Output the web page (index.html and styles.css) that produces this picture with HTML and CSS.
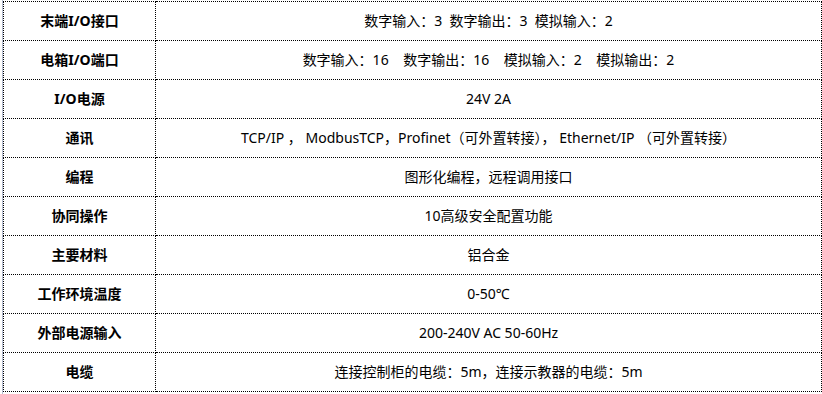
FILE: index.html
```html
<!DOCTYPE html>
<html lang="zh-CN">
<head>
<meta charset="utf-8">
<link rel="stylesheet" href="styles.css">
</head>
<body>
<div class="sheet">
<table class="spec">
<tr><th>末端I/O接口</th><td>数字输入：3&nbsp;&nbsp;数字输出：3&nbsp;&nbsp;模拟输入：2</td></tr>
<tr><th>电箱I/O端口</th><td>数字输入：16&nbsp;&nbsp;&nbsp;&nbsp;数字输出：16&nbsp;&nbsp;&nbsp;&nbsp;模拟输入：2&nbsp;&nbsp;&nbsp;&nbsp;模拟输出：2</td></tr>
<tr><th>I/O电源</th><td>24V 2A</td></tr>
<tr><th>通讯</th><td>TCP/IP ， ModbusTCP，Profinet（可外置转接）， Ethernet/IP （可外置转接）</td></tr>
<tr><th>编程</th><td>图形化编程，远程调用接口</td></tr>
<tr><th>协同操作</th><td>10高级安全配置功能</td></tr>
<tr><th>主要材料</th><td>铝合金</td></tr>
<tr><th>工作环境温度</th><td>0-50℃</td></tr>
<tr><th>外部电源输入</th><td>200-240V AC 50-60Hz</td></tr>
<tr><th>电缆</th><td>连接控制柜的电缆：5m，连接示教器的电缆：5m</td></tr>
</table>
</div>
</body>
</html>
```
FILE: styles.css
```css
html, body {
  margin: 0;
  padding: 0;
  background: #ffffff;
}
body {
  font-family: "Noto Sans", "Noto Sans CJK SC", sans-serif;
  font-size: 14px;
  color: #000;
}
.sheet {
  margin-left: 2px;
  padding-top: 1px;
  border-left: 1px solid #b6bed2;
  height: 393px;
}
.spec {
  border-collapse: collapse;
  width: 819px;
  table-layout: fixed;
}
.spec th,
.spec td {
  border: 1px dotted #000;
  height: 38px;
  padding: 0;
  text-align: center;
  vertical-align: middle;
  line-height: 16px;
}
.spec th {
  width: 151px;
  font-weight: bold;
}
.spec td {
  font-weight: normal;
}
```
